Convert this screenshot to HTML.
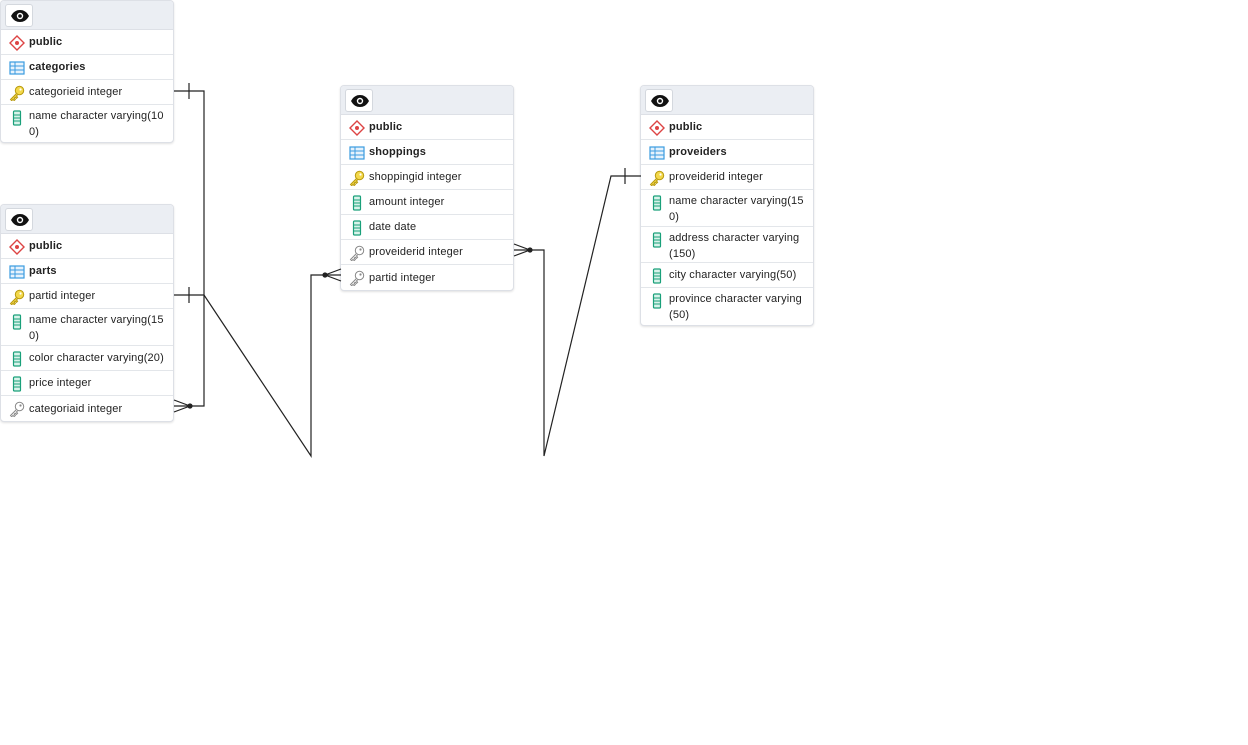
<!DOCTYPE html>
<html><head><meta charset="utf-8">
<style>
*{margin:0;padding:0;box-sizing:border-box}
body{width:1248px;height:745px;background:#fff;position:relative;overflow:hidden;font-family:"Liberation Sans",sans-serif;font-size:11px;color:#222}
.t{position:absolute;width:174px;background:#fff;border:1px solid #dde0e6;border-radius:4px;box-shadow:0 1px 2px rgba(0,0,0,.12);overflow:hidden}
.h{height:29px;background:#ebeef3;border-bottom:1px solid #dde0e6;position:relative}
.btn{position:absolute;left:4px;top:3px;width:28px;height:23px;background:#fff;border:1px solid #d4d8de;border-radius:3px}
.btn svg{position:absolute;left:5px;top:5px}
.r{position:relative;border-bottom:1px solid #e3e6ea;padding:0 0 0 28px;line-height:16px;display:flex;align-items:center;white-space:nowrap;letter-spacing:0.15px}
.r:last-child{border-bottom:none}
.r svg{position:absolute;left:8px;top:5px}
.b{font-weight:bold}
.s{height:25px}
.m{height:37px;align-items:flex-start;padding-top:3px}
</style></head><body>

<svg width="0" height="0" style="position:absolute">
<defs>
<symbol id="eye" viewBox="0 0 18 12"><path d="M0 6C2.5 1.5 5.5 0 9 0s6.5 1.5 9 6c-2.5 4.5-5.5 6-9 6S2.5 10.5 0 6z" fill="#111"/><circle cx="9" cy="6" r="3.2" fill="#fff"/><circle cx="9" cy="6" r="1.8" fill="#111"/></symbol>
<symbol id="sch" viewBox="0 0 16 16"><path d="M8 1L15 8 8 15 1 8z" fill="#fff" stroke="#d44" stroke-width="1.4"/><circle cx="8" cy="8" r="2" fill="#d44"/></symbol>
<symbol id="tbl" viewBox="0 0 16 16"><rect x="1" y="2" width="14" height="12" fill="#e6f2fc" stroke="#3a9be0" stroke-width="1.2"/><path d="M1 6H15M1 10H15M6 2V14" stroke="#3a9be0" stroke-width="1"/></symbol>
<symbol id="pk" viewBox="0 0 16 16"><circle cx="10.5" cy="5.5" r="4.2" fill="#f3d84a" stroke="#b89a10" stroke-width="1"/><circle cx="11.5" cy="4.5" r="1.1" fill="#fff"/><path d="M7.5 8.5L1.5 14.5l1.2 1.2 1.3-1.3 1.2 1.2 1.2-1.2-1.2-1.2 1-1 1.2 1.2 1.2-1.2-1.2-1.2 1.3-1.3" fill="#f3d84a" stroke="#b89a10" stroke-width="1"/></symbol>
<symbol id="fk" viewBox="0 0 16 16"><circle cx="10.5" cy="5.5" r="4.2" fill="#fff" stroke="#888" stroke-width="1"/><circle cx="11.5" cy="4.5" r="1.1" fill="#888"/><path d="M7.5 8.5L1.5 14.5l1.2 1.2 1.3-1.3 1.2 1.2 1.2-1.2-1.2-1.2 1-1 1.2 1.2 1.2-1.2-1.2-1.2 1.3-1.3" fill="#fff" stroke="#888" stroke-width="1"/></symbol>
<symbol id="col" viewBox="0 0 16 16"><rect x="4.5" y="1" width="7" height="14" rx="1" fill="#d8f3ea" stroke="#1aa07a" stroke-width="1.2"/><path d="M4.5 5H11.5M4.5 8H11.5M4.5 11H11.5" stroke="#1aa07a" stroke-width="1"/></symbol>
</defs></svg>

<div class="t" style="left:0;top:0">
<div class="h"><div class="btn"><svg width="18" height="12"><use href="#eye"/></svg></div></div>
<div class="r s b"><svg width="16" height="16"><use href="#sch"/></svg>public</div>
<div class="r s b"><svg width="16" height="16"><use href="#tbl"/></svg>categories</div>
<div class="r s"><svg width="16" height="16"><use href="#pk"/></svg>categorieid integer</div>
<div class="r m"><svg width="16" height="16"><use href="#col"/></svg>name character varying(10<br>0)</div>
</div>

<div class="t" style="left:0;top:204px">
<div class="h"><div class="btn"><svg width="18" height="12"><use href="#eye"/></svg></div></div>
<div class="r s b"><svg width="16" height="16"><use href="#sch"/></svg>public</div>
<div class="r s b"><svg width="16" height="16"><use href="#tbl"/></svg>parts</div>
<div class="r s"><svg width="16" height="16"><use href="#pk"/></svg>partid integer</div>
<div class="r m"><svg width="16" height="16"><use href="#col"/></svg>name character varying(15<br>0)</div>
<div class="r s"><svg width="16" height="16"><use href="#col"/></svg>color character varying(20)</div>
<div class="r s"><svg width="16" height="16"><use href="#col"/></svg>price integer</div>
<div class="r s"><svg width="16" height="16"><use href="#fk"/></svg>categoriaid integer</div>
</div>

<div class="t" style="left:340px;top:85px">
<div class="h"><div class="btn"><svg width="18" height="12"><use href="#eye"/></svg></div></div>
<div class="r s b"><svg width="16" height="16"><use href="#sch"/></svg>public</div>
<div class="r s b"><svg width="16" height="16"><use href="#tbl"/></svg>shoppings</div>
<div class="r s"><svg width="16" height="16"><use href="#pk"/></svg>shoppingid integer</div>
<div class="r s"><svg width="16" height="16"><use href="#col"/></svg>amount integer</div>
<div class="r s"><svg width="16" height="16"><use href="#col"/></svg>date date</div>
<div class="r s"><svg width="16" height="16"><use href="#fk"/></svg>proveiderid integer</div>
<div class="r s"><svg width="16" height="16"><use href="#fk"/></svg>partid integer</div>
</div>

<div class="t" style="left:640px;top:85px">
<div class="h"><div class="btn"><svg width="18" height="12"><use href="#eye"/></svg></div></div>
<div class="r s b"><svg width="16" height="16"><use href="#sch"/></svg>public</div>
<div class="r s b"><svg width="16" height="16"><use href="#tbl"/></svg>proveiders</div>
<div class="r s"><svg width="16" height="16"><use href="#pk"/></svg>proveiderid integer</div>
<div class="r m"><svg width="16" height="16"><use href="#col"/></svg>name character varying(15<br>0)</div>
<div class="r m" style="height:36px"><svg width="16" height="16"><use href="#col"/></svg>address character varying<br>(150)</div>
<div class="r s"><svg width="16" height="16"><use href="#col"/></svg>city character varying(50)</div>
<div class="r m"><svg width="16" height="16"><use href="#col"/></svg>province character varying<br>(50)</div>
</div>

<svg style="position:absolute;left:0;top:0" width="1248" height="745" fill="none" stroke="#222" stroke-width="1.2">
<path d="M174 91H204V406H174"/>
<path d="M189 83V99"/>
<path d="M174 400L190 406L174 412"/>
<circle cx="190" cy="406" r="2.6" fill="#222" stroke="none"/>
<path d="M174 295H204L311 456V275H341"/>
<path d="M189 287V303"/>
<path d="M341 269L325 275L341 281"/>
<circle cx="325" cy="275" r="2.6" fill="#222" stroke="none"/>
<path d="M514 250H544V456L611 176H641"/>
<path d="M625 168V184"/>
<path d="M514 244L530 250L514 256"/>
<circle cx="530" cy="250" r="2.6" fill="#222" stroke="none"/>
</svg>
</body></html>
